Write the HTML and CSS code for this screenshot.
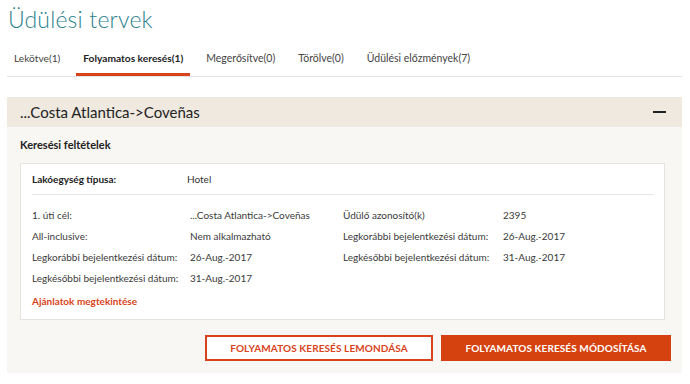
FILE: index.html
```html
<!DOCTYPE html>
<html lang="hu">
<head>
<meta charset="utf-8">
<link rel="stylesheet" href="styles.css">
</head>
<body>
<h1 class="title">Üdülési tervek</h1>
<nav class="tabs">
  <a class="tab">Lekötve(1)</a>
  <a class="tab active">Folyamatos keresés(1)</a>
  <a class="tab">Megerősítve(0)</a>
  <a class="tab">Törölve(0)</a>
  <a class="tab">Üdülési előzmények(7)</a>
</nav>
<section class="panel">
  <header class="panel-head">
    <span class="panel-title">...Costa Atlantica-&gt;Coveñas</span>
    <span class="collapse"></span>
  </header>
  <div class="panel-body">
    <h2 class="sub">Keresési feltételek</h2>
    <div class="card">
      <div class="type-row">
        <span class="type-label">Lakóegység típusa:</span>
        <span class="type-value">Hotel</span>
      </div>
      <div class="grid">
        <span>1. úti cél:</span><span>...Costa Atlantica-&gt;Coveñas</span>
        <span>Üdülő azonosító(k)</span><span>2395</span>
        <span>All-inclusive:</span><span>Nem alkalmazható</span>
        <span>Legkorábbi bejelentkezési dátum:</span><span>26-Aug.-2017</span>
        <span>Legkorábbi bejelentkezési dátum:</span><span>26-Aug.-2017</span>
        <span>Legkésőbbi bejelentkezési dátum:</span><span>31-Aug.-2017</span>
        <span>Legkésőbbi bejelentkezési dátum:</span><span>31-Aug.-2017</span>
      </div>
      <a class="link">Ajánlatok megtekintése</a>
    </div>
    <div class="actions">
      <button class="btn outline">FOLYAMATOS KERESÉS LEMONDÁSA</button>
      <button class="btn solid">FOLYAMATOS KERESÉS MÓDOSÍTÁSA</button>
    </div>
  </div>
</section>
</body>
</html>
```
FILE: styles.css
```css
* { box-sizing: border-box; }
body {
  margin: 0;
  padding: 0 8px 0 7px;
  font-family: "Lato", "Open Sans", sans-serif;
  color: #333;
  background: #fff;
}
.title {
  margin: 0;
  padding: 5px 0 0 1px;
  height: 38px;
  font-size: 23px;
  font-weight: 300;
  color: #2c7f8c;
  letter-spacing: 0.2px;
}
.tabs {
  display: flex;
  gap: 9px;
  margin-top: 8px;
  height: 31px;
  border-bottom: 1px solid #e3e3e3;
}
.tab {
  font-size: 10.5px;
  color: #444;
  padding: 6px 7px 0;
}
.tab:first-child { font-size: 10.2px; }
.tab.active {
  font-size: 10.2px;
  font-weight: 700;
  color: #222;
  border-bottom: 3px solid #d9431b;
}
.panel {
  margin-top: 20px;
  background: #f9f7f3;
  height: 276px;
}
.panel-head {
  display: flex;
  align-items: center;
  justify-content: space-between;
  height: 30px;
  background: #efe9df;
  padding: 0 16px 0 13px;
}
.panel-title {
  font-size: 15px;
  color: #222;
}
.collapse {
  width: 13px;
  height: 2px;
  background: #222;
}
.panel-body {
  padding: 11px 15px 0 13px;
}
.sub {
  margin: 0 0 12px;
  font-size: 11px;
  font-weight: 700;
  color: #222;
}
.card {
  background: #fff;
  border: 1px solid #e6e3de;
  margin-right: 2px;
  padding: 0 10px 12px 11px;
  font-size: 10px;
  color: #333;
}
.type-row {
  display: flex;
  height: 31px;
  align-items: center;
  border-bottom: 1px solid #e6e6e6;
}
.type-label { width: 155px; font-weight: 700; color: #222; }
.type-value { color: #333; }
.grid {
  display: grid;
  grid-template-columns: 158px 153px 160px auto;
  padding-top: 10px;
  color: #3a3a3a;
}
.grid span { height: 21px; line-height: 21px; }
.link {
  display: block;
  margin-top: 6px;
  color: #d9431b;
  font-weight: 700;
  font-size: 10px;
}
.actions {
  display: flex;
  justify-content: flex-end;
  gap: 8px;
  margin-top: 15px;
  margin-right: -4px;
}
.btn {
  font-family: inherit;
  font-size: 10px;
  font-weight: 700;
  height: 26px;
  width: 228px;
  letter-spacing: 0.1px;
  cursor: pointer;
}
.btn.outline {
  background: #fff;
  color: #d9431b;
  border: 2px solid #d9431b;
}
.btn.solid {
  background: #d5420f;
  color: #fff;
  border: 0;
  width: 230px;
}
```
